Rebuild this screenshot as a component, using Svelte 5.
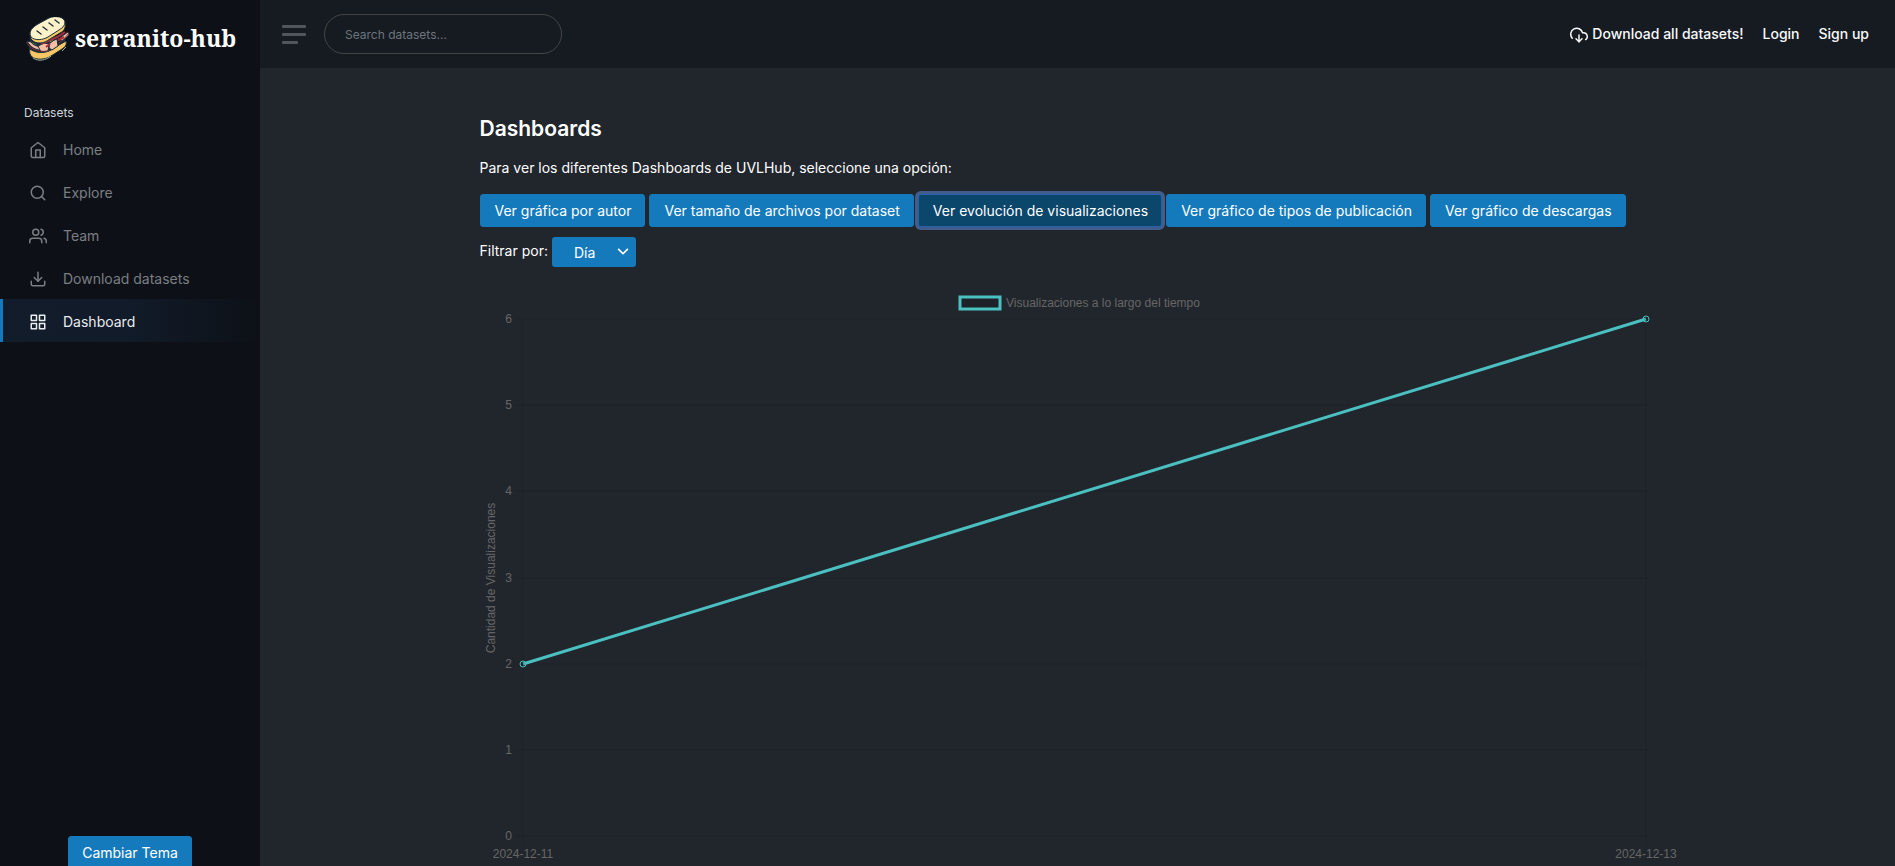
<script>
  const nav = [
    { label: 'Home', icon: 'home' },
    { label: 'Explore', icon: 'search' },
    { label: 'Team', icon: 'users' },
    { label: 'Download datasets', icon: 'download' },
    { label: 'Dashboard', icon: 'grid' }
  ];
  const charts = [
    'Ver gráfica por autor',
    'Ver tamaño de archivos por dataset',
    'Ver evolución de visualizaciones',
    'Ver gráfico de tipos de publicación',
    'Ver gráfico de descargas'
  ];
  let page = $state('Dashboard');
  let selected = $state(charts[2]);
  let period = $state('Día');

  const plot = { left: 43, right: 1166, top: 32, bottom: 549 };
  const yMax = 6;
  const points = [
    { date: '2024-12-11', value: 2 },
    { date: '2024-12-13', value: 6 }
  ];
  const ticks = [0, 1, 2, 3, 4, 5, 6];
  const y = (v) => Math.round(plot.bottom - (v / yMax) * (plot.bottom - plot.top));
  const x = (i) => plot.left + (i / (points.length - 1)) * (plot.right - plot.left);
</script>

<div class="shell">
  <aside class="sidebar">
    <a class="brand" href="#home">
      <svg class="logo" viewBox="0 0 44 44" aria-hidden="true">
        <g stroke="#17303f" stroke-width="1" stroke-linejoin="round">
          <path d="M3 27l37-9-2 9-14 9c-6 4-16 4-20 0z" fill="#29262f" />
          <path d="M4 32c5 4 14 5 21 1l8-5 7-4c1 4-1 6-4 8l-11 7c-6 4-15 4-19 1-2-2-3-5-2-8z" fill="#f8c662" />
          <path d="M1 24l4 1c4 4 9 6 15 5l-2 3C10 34 4 30 1 24z" fill="#f0b49f" />
          <path d="M12 29l6-3 5 1-1 7-7 1z" fill="#f5bfa5" />
          <path d="M24 25l7-3 1 7-6 4-3-2z" fill="#f5bfa5" />
          <path d="M36 19l6-4 1 3-5 5-4 1z" fill="#f0b49f" />
          <path d="M4 22c2 4 5 5 9 5l-3 1C7 28 5 26 4 22z" fill="#72a943" />
          <path d="M23 24l5-2-1 2-3 2z" fill="#72a943" />
        </g>
        <path d="M15 27l9-4 7-3 8-5M20 30l4-3M32 23l6-3" fill="none" stroke="#a92e3c" stroke-width="2" />
        <path d="M0 25l3 4c6 5 13 6 20 5M33 26l5-4 5-6" fill="none" stroke="#6d2f38" stroke-width="1" />
        <path d="M4 15c-1 7 3 11 10 11 4 0 7-2 10-4l10-6c4-2 6-5 5-10z" fill="#f8c662" stroke="#17303f" />
        <path d="M5 20C2 14 7 10 12 7l11-6c7-3 15-1 16 4 0 4-3 6-6 8l-11 7c-5 3-13 4-17 0z" fill="#fff2c9" stroke="#17303f" />
        <path d="M11 14l4 3M17 10l4 3M23 6l4 3M29 3l4 3" fill="none" stroke="#203642" stroke-width="1.5" stroke-linecap="round" />
        <path d="M7 41c6 4 13 2 18-2M36 34l4-4" fill="none" stroke="#9cae9a" stroke-width="1" />
      </svg>
      <span>serranito-hub</span>
    </a>

    <h2>Datasets</h2>
    <nav aria-label="Datasets">
      {#each nav as item}
        <a href="#{item.icon}" class:active={page === item.label} onclick={() => (page = item.label)}>
          <svg class="icon" viewBox="0 0 24 24" aria-hidden="true">
            {#if item.icon === 'home'}
              <path d="M3 9l9-7 9 7v11a2 2 0 0 1-2 2H5a2 2 0 0 1-2-2z" />
              <polyline points="9 22 9 12 15 12 15 22" />
            {:else if item.icon === 'search'}
              <circle cx="11" cy="11" r="8" />
              <path d="M21 21l-4.35-4.35" />
            {:else if item.icon === 'users'}
              <path d="M17 21v-2a4 4 0 0 0-4-4H5a4 4 0 0 0-4 4v2" />
              <circle cx="9" cy="7" r="4" />
              <path d="M23 21v-2a4 4 0 0 0-3-3.87M16 3.13a4 4 0 0 1 0 7.75" />
            {:else if item.icon === 'download'}
              <path d="M21 15v4a2 2 0 0 1-2 2H5a2 2 0 0 1-2-2v-4M12 15V3" />
              <polyline points="7 10 12 15 17 10" />
            {:else}
              <rect x="3" y="3" width="7" height="7" />
              <rect x="14" y="3" width="7" height="7" />
              <rect x="14" y="14" width="7" height="7" />
              <rect x="3" y="14" width="7" height="7" />
            {/if}
          </svg>
          {item.label}
        </a>
      {/each}
    </nav>
    <button class="btn theme" type="button">Cambiar Tema</button>
  </aside>

  <div class="main">
    <header>
      <button class="toggle" type="button" aria-label="Menu"><i></i><i></i><i></i></button>
      <input class="search" type="text" placeholder="Search datasets..." aria-label="Search datasets" />
      <div class="links">
        <a href="#download-all">
          <svg class="cloud" viewBox="0 0 24 24" aria-hidden="true">
            <polyline points="8 17 12 21 16 17" />
            <path d="M12 12v9" />
            <path d="M20.88 18.09A5 5 0 0 0 18 9h-1.26A8 8 0 1 0 3 16.29" />
          </svg>
          Download all datasets!
        </a>
        <a href="#login">Login</a>
        <a href="#signup">Sign up</a>
      </div>
    </header>

    <main>
      <div class="content">
        <h1>Dashboards</h1>
        <p>Para ver los diferentes Dashboards de UVLHub, seleccione una opción:</p>
        <div class="options">
          {#each charts as chart}
            <button class="btn" class:selected={selected === chart} type="button" onclick={() => (selected = chart)}>{chart}</button>
          {/each}
        </div>
        <div class="filter">
          <label for="period">Filtrar por:</label>
          <div class="select">
            <select id="period" bind:value={period}>
              <option>Día</option>
              <option>Mes</option>
              <option>Año</option>
            </select>
            <svg viewBox="0 0 16 16" aria-hidden="true"><path d="M3 5l5 5 5-5" /></svg>
          </div>
        </div>

        <svg class="chart" viewBox="0 0 1196 598" role="img" aria-label="Visualizaciones a lo largo del tiempo">
          <rect class="key" x="480" y="10" width="40" height="12" />
          <text x="526" y="20">Visualizaciones a lo largo del tiempo</text>
          {#each ticks as t}
            <path class="gridline" d="M{plot.left - 8} {y(t)}H{plot.right}" />
            <text x="32" y={y(t) + 4} text-anchor="end">{t}</text>
          {/each}
          {#each points as p, i}
            <path class="gridline" d="M{x(i)} {plot.top}V{plot.bottom + 8}" />
            <text x={x(i)} y="571" text-anchor="middle">{p.date}</text>
          {/each}
          <text transform="translate(15 291) rotate(-90)" text-anchor="middle">Cantidad de Visualizaciones</text>
          <polyline class="series" points={points.map((p, i) => `${x(i)},${y(p.value)}`).join(' ')} />
          {#each points as p, i}
            <circle class="point" cx={x(i)} cy={y(p.value)} r="3" />
          {/each}
        </svg>
      </div>
    </main>
  </div>
</div>

<style>
  :global(body) {
    margin: 0;
    background: #21262d;
    font-family: Inter, sans-serif;
    font-size: 14px;
    color: #fff;
  }
  .shell {
    display: flex;
    height: 100vh;
    overflow: hidden;
  }
  a {
    color: inherit;
    text-decoration: none;
  }
  .sidebar {
    box-sizing: border-box;
    display: flex;
    flex: 0 0 260px;
    flex-direction: column;
    height: calc(100vh + 3px);
    background: #0d1117;
  }
  .brand {
    display: flex;
    align-items: center;
    gap: 5px;
    height: 44px;
    padding: 17px 0 0 26px;
    font: bold 23px/32px "Noto Serif", "DejaVu Serif Condensed", "DejaVu Serif", serif;
    white-space: nowrap;
  }
  .brand span {
    padding-bottom: 2px;
  }
  .logo {
    width: 44px;
    height: 44px;
  }
  h2 {
    margin: 42px 0 5px;
    padding-left: 24px;
    font-size: 12px;
    font-weight: 400;
    line-height: 19px;
    color: #ced4da;
  }
  nav a {
    display: flex;
    align-items: center;
    gap: 16px;
    padding: 12px 26px 9px;
    border-left: 3px solid transparent;
    line-height: 22px;
    color: #7b7e82;
  }
  nav a.active {
    border-left-color: #157abc;
    background: linear-gradient(90deg, rgba(59, 125, 221, 0.1), rgba(59, 125, 221, 0.09) 50%, transparent);
    background-origin: border-box;
    color: #e9ecef;
  }
  .icon,
  .cloud {
    width: 18px;
    height: 18px;
    fill: none;
    stroke: currentColor;
    stroke-width: 2;
    stroke-linecap: round;
    stroke-linejoin: round;
  }
  .btn {
    box-sizing: border-box;
    height: 33px;
    padding: 0 13px;
    border: 1px solid #157abc;
    border-radius: 3px;
    background: #157abc;
    font: 14px/21px Inter, sans-serif;
    color: #fff;
    white-space: nowrap;
    cursor: pointer;
  }
  .theme {
    margin: auto auto 0;
  }
  .main {
    flex: 1;
    min-width: 0;
  }
  header {
    box-sizing: border-box;
    display: flex;
    align-items: center;
    height: 68px;
    padding: 0 26px 0 22px;
    background: #161b22;
  }
  .toggle {
    display: flex;
    flex-direction: column;
    gap: 5px;
    width: 24px;
    padding: 0;
    border: 0;
    background: none;
  }
  .toggle i {
    width: 24px;
    height: 3px;
    border-radius: 1px;
    background: #51565d;
  }
  .toggle i:last-child {
    width: 16px;
  }
  .search {
    box-sizing: border-box;
    width: 238px;
    height: 40px;
    margin-left: 18px;
    padding: 0 20px;
    border: 1px solid #444;
    border-radius: 20px;
    background: none;
    font: 12px/18px Inter, sans-serif;
    color: #fff;
  }
  .search::placeholder {
    color: #6c757d;
  }
  .links {
    display: flex;
    gap: 19px;
    margin-left: auto;
    font-weight: 500;
    line-height: 22px;
    color: #f8f9fa;
  }
  .links a {
    display: flex;
    align-items: flex-start;
    gap: 4px;
  }
  .cloud {
    margin-top: 3px;
  }
  main {
    padding: 48px 24px;
  }
  .content {
    max-width: 1196px;
    margin: 0 auto;
  }
  h1 {
    margin: 0;
    font-size: 21px;
    font-weight: 600;
    line-height: 26px;
  }
  p {
    margin: 15px 0 16px;
    line-height: 21px;
  }
  .options {
    display: flex;
    flex-wrap: wrap;
    gap: 4px;
  }
  .options .btn {
    padding: 0 13px 0 14px;
  }
  .selected {
    border-color: #2a60aa;
    background: #0b466b;
    box-shadow: 0 0 0 3px #405d8e;
  }
  .filter {
    display: flex;
    gap: 4px;
    margin: 10px 0 20px;
    line-height: 28px;
  }
  .select {
    display: grid;
    align-items: center;
  }
  .select > :global(*) {
    grid-area: 1 / 1;
  }
  select {
    appearance: none;
    box-sizing: border-box;
    width: 84px;
    height: 30px;
    padding: 0 22px;
    border: 0;
    border-radius: 3px;
    background: #157abc;
    font: 14px/21px Inter, sans-serif;
    color: #fff;
  }
  .select svg {
    justify-self: end;
    width: 14px;
    height: 14px;
    margin-right: 6px;
    fill: none;
    stroke: #fff;
    stroke-width: 2;
    stroke-linecap: round;
    stroke-linejoin: round;
    pointer-events: none;
  }
  .chart {
    display: block;
    width: 100%;
    overflow: visible;
    font-family: "Liberation Sans", Arial, sans-serif;
    font-size: 12px;
    fill: #666;
  }
  .gridline {
    stroke: rgba(0, 0, 0, 0.1);
    stroke-width: 1;
  }
  .key {
    fill: rgba(0, 0, 0, 0.1);
    stroke: #4bc0c0;
    stroke-width: 3;
  }
  .series {
    fill: none;
    stroke: #4bc0c0;
    stroke-width: 3;
  }
  .point {
    fill: rgba(0, 0, 0, 0.1);
    stroke: #4bc0c0;
    stroke-width: 1;
  }
</style>
